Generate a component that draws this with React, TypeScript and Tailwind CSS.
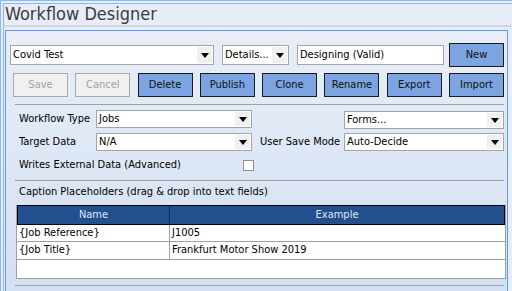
import React from 'react'

const font = "font-['DejaVu_Sans_Condensed','DejaVu_Sans',sans-serif] font-stretch-condensed"

function Arrow() {
  return (
    <svg width="8" height="5" viewBox="0 0 8 5">
      <polygon points="0,0 8,0 4,5" fill="#000" />
    </svg>
  )
}

function Select({ value, className }: { value: string; className: string }) {
  return (
    <div className={`flex items-stretch border border-[#a5a5a5] bg-white ${className}`}>
      <div className="flex-1 pl-[2px] flex items-center text-[11px] text-black truncate">{value}</div>
      <div className="w-[15px] my-[1px] mr-[1px] bg-[#f0f0f0] flex items-center justify-center">
        <Arrow />
      </div>
    </div>
  )
}

function Btn({ label, disabled }: { label: string; disabled?: boolean }) {
  return (
    <div
      className={
        disabled
          ? 'w-[55px] h-[24px] border border-[#a9a9a9] bg-[#f0f0f0] text-[#a3a3a3] flex items-center justify-center text-[11px]'
          : 'w-[55px] h-[24px] border border-[#1b1b1b] bg-[#7ba4e0] text-[#111] flex items-center justify-center text-[11px]'
      }
    >
      {label}
    </div>
  )
}

export default function App() {
  const buttons = ['Save', 'Cancel', 'Delete', 'Publish', 'Clone', 'Rename', 'Export', 'Import']
  return (
    <div className={`w-[512px] h-[291px] overflow-hidden bg-[#e6edf8] border-t border-l border-[#8cb9f2] ${font}`}>
      <div className="h-full mt-[2px] ml-[2px] border-t border-l border-[#8cb9f2] flex flex-col">
        <div className="h-[21px] pl-[1px] text-[18px] leading-[20px] text-[#3c3c3c]">Workflow Designer</div>
        <div className="h-[2px] bg-[#d2d6de]" />
        <div className="mt-[3px] ml-[1px] w-[503px] flex-1 border border-b-0 border-[#5b9be9] bg-gradient-to-b from-[#e8eef8] to-[#d3e0f2] text-[11px] text-black">
          {/* top row */}
          <div className="mt-[12px] ml-[4px] h-[24px] flex items-center">
            <Select value="Covid Test" className="w-[204px] h-[20px]" />
            <Select value="Details..." className="ml-[8px] w-[67px] h-[20px]" />
            <div className="ml-[8px] w-[147px] h-[20px] border border-[#a5a5a5] bg-white pl-[2px] flex items-center">Designing (Valid)</div>
            <div className="ml-[5px]">
              <Btn label="New" />
            </div>
          </div>
          {/* action buttons */}
          <div className="mt-[6px] ml-[7px] w-[491px] flex justify-between">
            {buttons.map((b) => (
              <Btn key={b} label={b} disabled={b === 'Save' || b === 'Cancel'} />
            ))}
          </div>
          <div className="mt-[7px] ml-[9px] w-[489px] h-px bg-[#a0a0a0]" />
          {/* settings */}
          <div className="mt-[5px] pl-[13px] pr-[3px] flex items-center h-[18px]">
            <div className="w-[77px]">Workflow Type</div>
            <Select value="Jobs" className="w-[156px] h-[18px]" />
            <Select value="Forms..." className="ml-auto w-[160px] h-[18px] translate-y-px" />
          </div>
          <div className="mt-[5px] pl-[13px] pr-[3px] flex items-center h-[18px]">
            <div className="w-[77px]">Target Data</div>
            <Select value="N/A" className="w-[156px] h-[18px]" />
            <div className="ml-[8px]">User Save Mode</div>
            <Select value="Auto-Decide" className="ml-auto w-[160px] h-[18px]" />
          </div>
          <div className="mt-[8px] pl-[13px] flex items-center h-[12px]">
            <div className="w-[224px]">Writes External Data (Advanced)</div>
            <div className="w-[11px] h-[11px] border border-[#8e8f8f] bg-white" />
          </div>
          <div className="mt-[9px] ml-[9px] w-[489px] h-px bg-[#a0a0a0]" />
          <div className="mt-[4px] pl-[13px] h-[14px] flex items-center">
            Caption Placeholders (drag &amp; drop into text fields)
          </div>
          {/* table */}
          <div className="mt-[6px] ml-[10px] w-[490px] border border-t-0 border-[#a0a0a0] bg-white">
            <div className="h-[20px] flex bg-[#22508f] border border-black text-[#dfe7f2]">
              <div className="w-[152px] flex items-center justify-center border-r border-[#15305a]">Name</div>
              <div className="flex-1 flex items-center justify-center">Example</div>
            </div>
            {[
              ['{Job Reference}', 'J1005', 'h-[17px]'],
              ['{Job Title}', 'Frankfurt Motor Show 2019', 'h-[18px]'],
            ].map(([n, e, h]) => (
              <div key={n} className={`${h} flex border-b border-[#a0a0a0]`}>
                <div className="w-[153px] pl-[2px] flex items-center border-r border-[#a0a0a0]">{n}</div>
                <div className="flex-1 pl-[2px] flex items-center">{e}</div>
              </div>
            ))}
            <div className="h-[18px]" />
          </div>
          <div className="mt-[6px] ml-[9px] w-[489px] h-px bg-[#a0a0a0]" />
        </div>
      </div>
    </div>
  )
}
